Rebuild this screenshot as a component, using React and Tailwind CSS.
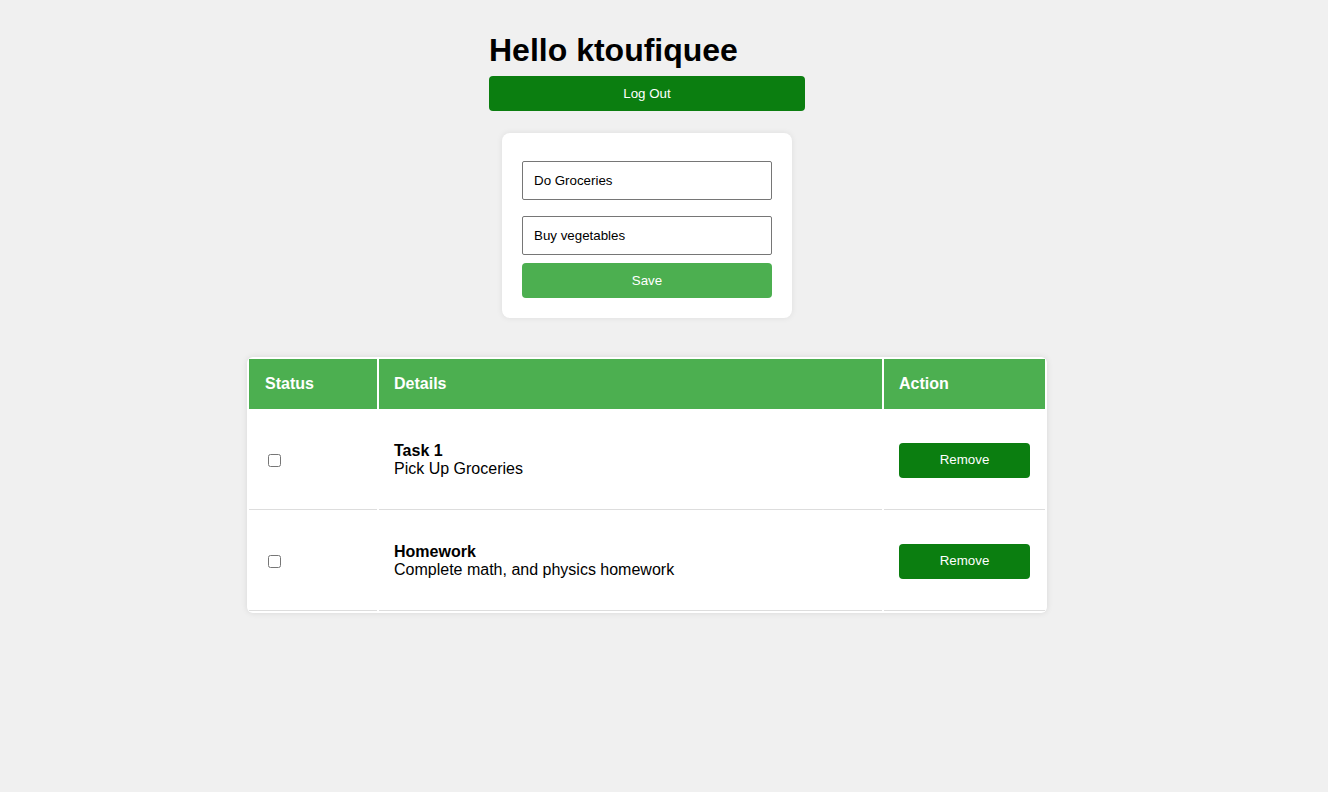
const tasks = [
  { title: "Task 1", body: "Pick Up Groceries" },
  { title: "Homework", body: "Complete math, and physics homework" },
]

export default function App() {
  return (
    <div className="min-h-screen bg-[#f0f0f0] font-['Liberation_Sans',Arial,sans-serif] text-black">
      <div className="w-[1294px] flex flex-col items-center pt-[32px]">
        <div className="w-[316px]">
          <h1 className="text-[32px] font-bold leading-[37px] h-[37px]">Hello ktoufiquee</h1>
          <button className="mt-[7px] w-full h-[35px] rounded-[4px] bg-[#0b7e10] text-white text-[13.33px] font-medium">
            Log Out
          </button>
        </div>

        <div className="mt-[22px] w-[290px] bg-white rounded-[8px] shadow-[0_0_6px_rgba(0,0,0,0.08)] px-[20px] pt-[28px] pb-[20px]">
          <input
            defaultValue="Do Groceries"
            className="block w-full h-[39px] border border-[#767676] rounded-[2px] px-[11px] text-[13.33px] bg-white outline-none"
          />
          <input
            defaultValue="Buy vegetables"
            className="block mt-[16px] w-full h-[39px] border border-[#767676] rounded-[2px] px-[11px] text-[13.33px] bg-white outline-none"
          />
          <button className="mt-[8px] w-full h-[35px] rounded-[4px] bg-[#4caf50] text-white text-[13.33px] font-medium">
            Save
          </button>
        </div>

        <div className="mt-[39px] w-[800px] bg-white rounded-[6px] shadow-[0_0_6px_rgba(0,0,0,0.1)]">
          <table className="w-[800px] border-separate border-spacing-[2px] table-fixed">
            <colgroup>
              <col className="w-[128px]" />
              <col className="w-[503px]" />
              <col className="w-[161px]" />
            </colgroup>
            <thead>
              <tr className="bg-[#4caf50] text-white text-[16px] font-bold text-left">
                <th className="h-[50px] px-[16px]">Status</th>
                <th className="h-[50px] px-[15px]">Details</th>
                <th className="h-[50px] px-[15px]">Action</th>
              </tr>
            </thead>
            <tbody>
              {tasks.map((t) => (
                <tr key={t.title}>
                  <td className="h-[99px] px-[15px] border-b border-[#ddd] align-middle">
                    <input type="checkbox" className="ml-[4px] w-[13px] h-[13px] align-middle" />
                  </td>
                  <td className="h-[99px] px-[15px] border-b border-[#ddd] align-middle text-[16px] leading-[18px]">
                    <div className="font-bold">{t.title}</div>
                    <div>{t.body}</div>
                  </td>
                  <td className="h-[99px] px-[15px] border-b border-[#ddd] align-middle">
                    <button className="w-full h-[35px] rounded-[4px] bg-[#0b7e10] text-white text-[13.33px] font-medium">
                      Remove
                    </button>
                  </td>
                </tr>
              ))}
            </tbody>
          </table>
        </div>
      </div>
    </div>
  )
}
